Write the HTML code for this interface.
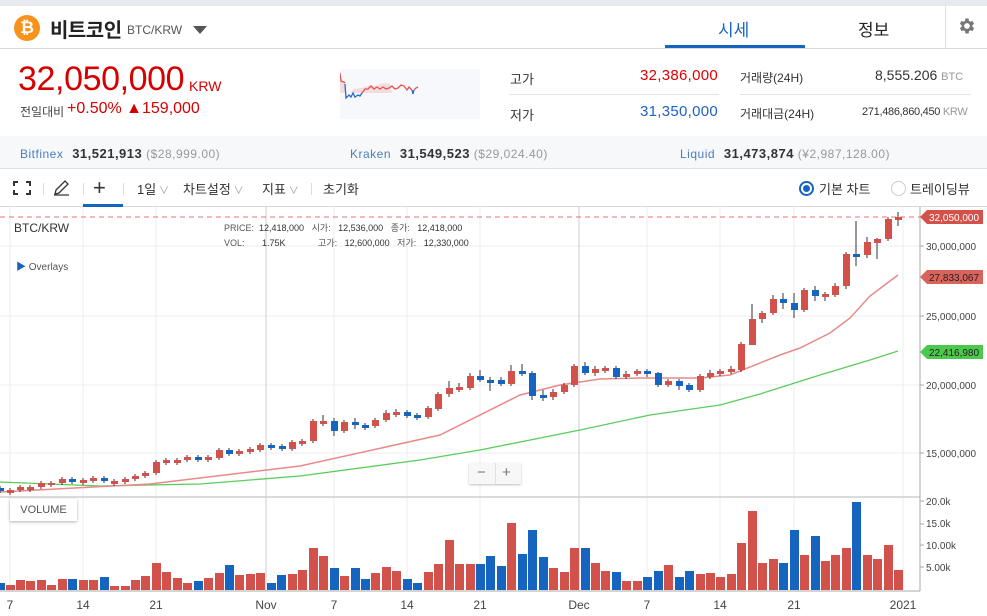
<!DOCTYPE html>
<html><head><meta charset="utf-8">
<style>
*{margin:0;padding:0;box-sizing:border-box}
body{width:987px;height:616px;overflow:hidden;background:#fff;font-family:"Liberation Sans","Noto Sans CJK KR",sans-serif;position:relative;color:#333}
.a{position:absolute;white-space:nowrap}
</style></head><body>
<div class="a" style="left:0;top:0;width:987px;height:6px;background:#e6e9ee"></div>
<!-- header -->
<div class="a" style="left:0;top:48px;width:987px;height:1px;background:#d5d8de"></div>
<div class="a" style="left:14px;top:15px;width:26px;height:26px;border-radius:50%;background:#f7931a;color:#fff;font-weight:bold;font-size:17px;text-align:center;line-height:26px">₿</div>
<div class="a" style="left:50px;top:14px;font-size:20px;font-weight:bold;color:#222;letter-spacing:-0.5px">비트코인</div>
<div class="a" style="left:127px;top:23px;font-size:12px;color:#555">BTC/KRW</div>
<div class="a" style="left:193px;top:26px;width:0;height:0;border-left:7px solid transparent;border-right:7px solid transparent;border-top:8px solid #555"></div>
<div class="a" style="left:718px;top:16px;font-size:17px;color:#1565c0">시세</div>
<div class="a" style="left:665px;top:45px;width:140px;height:3px;background:#1565c0"></div>
<div class="a" style="left:858px;top:16px;font-size:17px;color:#222">정보</div>
<div class="a" style="left:945px;top:6px;width:1px;height:42px;background:#e0e0e0"></div>
<svg class="a" style="left:957px;top:16px" width="20" height="20" viewBox="0 0 24 24"><path fill="#777" d="M19.4 13a7.5 7.5 0 000-2l2.1-1.6-2-3.5-2.5 1a7.3 7.3 0 00-1.7-1L15 3h-4l-.4 2.9a7.3 7.3 0 00-1.7 1l-2.5-1-2 3.5L6.6 11a7.5 7.5 0 000 2l-2.1 1.6 2 3.5 2.5-1a7.3 7.3 0 001.7 1L11 21h4l.4-2.9a7.3 7.3 0 001.7-1l2.5 1 2-3.5zM13 15.5a3.5 3.5 0 110-7 3.5 3.5 0 010 7z" transform="translate(-1 0)"/></svg>
<!-- price -->
<div class="a" style="left:18px;top:60px;font-size:34px;color:#d60000;letter-spacing:-0.4px">32,050,000</div>
<div class="a" style="left:189px;top:78px;font-size:14px;color:#d60000">KRW</div>
<div class="a" style="left:20px;top:103px;font-size:12px;color:#444">전일대비</div>
<div class="a" style="left:67px;top:100px;font-size:16px;color:#d60000">+0.50% ▲159,000</div>
<div class="a" style="left:340px;top:69px;width:140px;height:50px;background:#f7f8fb"></div>
<svg class="a" style="left:340px;top:69px" width="140" height="50"><path d="M0 4 L2 12 L5 14 L5 24 L0 24Z" fill="#f5dcdc"/><path d="M10 24 L14 20 L20 19 L25 18 L30 16 L35 17 L40 15 L45 14 L50 15 L52 24Z" fill="#f5dcdc"/><polyline points="0,4 1,12 4,13 5,14" fill="none" stroke="#e05555" stroke-width="1.3"/><polyline points="5,15 6,29 9,26 11,28 13,24 15,28 18,26 20,27 22,24" fill="none" stroke="#1e6fd0" stroke-width="1.3"/><polyline points="22,24 25,20 28,20 31,17 34,20 37,18 40,20 43,18 46,20 49,19 52,17 55,20 58,19 61,16 64,17 67,21 69,18 72,21" fill="none" stroke="#e05555" stroke-width="1.3"/><polyline points="72,21 73,25 74,21" fill="none" stroke="#1e6fd0" stroke-width="1.3"/><polyline points="74,21 76,19 78,18" fill="none" stroke="#e05555" stroke-width="1.3"/></svg>
<div class="a" style="left:510px;top:69px;font-size:13px;color:#333">고가</div>
<div class="a" style="left:640px;top:67px;font-size:15px;color:#e00000;letter-spacing:0.3px">32,386,000</div>
<div class="a" style="left:510px;top:94px;width:209px;height:1px;background:#e3e3e3"></div>
<div class="a" style="left:510px;top:105px;font-size:13px;color:#333">저가</div>
<div class="a" style="left:640px;top:103px;font-size:15px;color:#1e60c8;letter-spacing:0.3px">31,350,000</div>
<div class="a" style="left:740px;top:69px;font-size:12px;color:#333">거래량(24H)</div>
<div class="a" style="left:875px;top:67px;font-size:14px;color:#333">8,555.206 <span style="font-size:11px;color:#999">BTC</span></div>
<div class="a" style="left:740px;top:94px;width:230px;height:1px;background:#e3e3e3"></div>
<div class="a" style="left:740px;top:105px;font-size:12px;color:#333">거래대금(24H)</div>
<div class="a" style="left:862px;top:106px;font-size:11px;color:#333;letter-spacing:-0.3px">271,486,860,450 <span style="color:#999">KRW</span></div>
<!-- exchanges -->
<div class="a" style="left:0;top:136px;width:987px;height:33px;background:#f7f8fa;border-bottom:1px solid #dcdfe4"></div>
<div class="a" style="left:20px;top:146px;font-size:12px;color:#4a7fc0;letter-spacing:0.5px">Bitfinex <b style="color:#333;font-size:13px;margin-left:5px">31,521,913</b> <span style="color:#999">($28,999.00)</span></div>
<div class="a" style="left:350px;top:146px;font-size:12px;color:#4a7fc0;letter-spacing:0.5px">Kraken <b style="color:#333;font-size:13px;margin-left:5px">31,549,523</b> <span style="color:#999">($29,024.40)</span></div>
<div class="a" style="left:680px;top:146px;font-size:12px;color:#4a7fc0;letter-spacing:0.5px">Liquid <b style="color:#333;font-size:13px;margin-left:5px">31,473,874</b> <span style="color:#999">(¥2,987,128.00)</span></div>
<!-- toolbar -->
<div class="a" style="left:0;top:206px;width:987px;height:1px;background:#d8d8d8"></div>
<svg class="a" style="left:13px;top:181px" width="18" height="14" fill="none" stroke="#333" stroke-width="2"><path d="M1 5V1h4M13 1h4v4M17 9v4h-4M5 13H1V9"/></svg>
<div class="a" style="left:43px;top:183px;width:1px;height:12px;background:#ddd"></div>
<svg class="a" style="left:53px;top:180px" width="18" height="16" fill="none" stroke="#333" stroke-width="1.3"><path d="M2 14l1-4 9-9 3 3-9 9zM1 15h15"/></svg>
<div class="a" style="left:83px;top:183px;width:1px;height:12px;background:#ddd"></div>
<div class="a" style="left:93px;top:175px;font-size:22px;color:#333;font-weight:300">+</div>
<div class="a" style="left:83px;top:204px;width:40px;height:3px;background:#1565c0"></div>
<div class="a" style="left:123px;top:183px;width:1px;height:12px;background:#ddd"></div>
<div class="a" style="left:137px;top:179px;font-size:13px;color:#333">1일<span style="color:#999;font-size:10px"> ∨</span></div>
<div class="a" style="left:183px;top:179px;font-size:13px;color:#333">차트설정<span style="color:#999;font-size:10px"> ∨</span></div>
<div class="a" style="left:262px;top:179px;font-size:13px;color:#333">지표<span style="color:#999;font-size:10px"> ∨</span></div>
<div class="a" style="left:311px;top:183px;width:1px;height:12px;background:#ddd"></div>
<div class="a" style="left:323px;top:179px;font-size:13px;color:#333">초기화</div>
<div class="a" style="left:799px;top:181px;width:15px;height:15px;border-radius:50%;border:2px solid #1565c0"></div>
<div class="a" style="left:803px;top:185px;width:7px;height:7px;border-radius:50%;background:#1565c0"></div>
<div class="a" style="left:819px;top:179px;font-size:13px;color:#333">기본 차트</div>
<div class="a" style="left:891px;top:181px;width:15px;height:15px;border-radius:50%;border:1.5px solid #ccc"></div>
<div class="a" style="left:910px;top:179px;font-size:13px;color:#333">트레이딩뷰</div>
<!-- chart -->
<svg class="a" style="left:0;top:207px" width="987" height="409" viewBox="0 207 987 409">
<g stroke="#ececec" stroke-width="1">
<line x1="0" y1="246" x2="920" y2="246"/><line x1="0" y1="316" x2="920" y2="316"/><line x1="0" y1="385" x2="920" y2="385"/><line x1="0" y1="453" x2="920" y2="453"/>
<line x1="10" y1="207" x2="10" y2="591"/><line x1="83" y1="207" x2="83" y2="591"/><line x1="156" y1="207" x2="156" y2="591"/><line x1="334" y1="207" x2="334" y2="591"/><line x1="407" y1="207" x2="407" y2="591"/><line x1="480" y1="207" x2="480" y2="591"/><line x1="647" y1="207" x2="647" y2="591"/><line x1="720" y1="207" x2="720" y2="591"/><line x1="794" y1="207" x2="794" y2="591"/><line x1="903" y1="207" x2="903" y2="591"/>
</g>
<g stroke="#ccc"><line x1="266" y1="207" x2="266" y2="591"/><line x1="579" y1="207" x2="579" y2="591"/></g>
<line x1="0" y1="497" x2="920" y2="497" stroke="#cfcfcf" stroke-width="1.5"/>
<line x1="920" y1="207" x2="920" y2="591" stroke="#aaa"/>
<line x1="0" y1="591" x2="920" y2="591" stroke="#aaa"/>
<line x1="0" y1="217" x2="920" y2="217" stroke="#e57373" stroke-dasharray="5,4"/>
<polyline fill="none" stroke="#5ccc5c" stroke-width="1.3" points="0,482 100,486 200,484 300,476 420,460 480,450 580,430 650,415 720,405 760,394 820,375 870,360 898,351"/>
<polyline fill="none" stroke="#e88a8a" stroke-width="1.5" points="0,492 150,484 300,466 440,435 520,395 560,385 600,379 640,378 700,378 730,375 780,355 800,348 830,333 850,318 870,296 898,275"/>
<g stroke="#333" stroke-width="1">
<path d="M0 486v7M10 488v7M20 485v7M30 485v7M41 481v8M51 481v6M62 477v8M72 477v7M83 478v7M93 476v7M104 476v7M114 479v7M125 477v7M135 474v7M145 471v7M156 460v15M166 458v7M177 458v7M187 455v7M198 455v7M208 455v7M219 448v12M229 448v8M239 449v7M250 447v7M260 443v9M271 443v7M282 444v7M292 440v11M302 439v7M313 419v24M323 415v11M334 418v18M344 420v13M355 418v11M365 423v7M375 418v10M386 410v12M396 409v8M407 410v8M417 413v7M428 406v13M438 392v19M449 381v16M459 383v9M470 373v17M480 370v12M490 377v14M501 377v9M511 365v21M522 364v12M532 371v29M543 390v11M553 389v11M564 383v11M574 364v23M585 362v13M595 366v10M605 366v7M616 366v13M626 371v8M637 369v7M647 369v8M658 372v15M668 379v8M679 379v11M689 383v9M700 374v18M710 370v9M720 369v7M731 366v8M741 342v30M752 304v38M762 311v12M773 295v20M783 293v16M794 293v25M804 288v24M815 286v15M825 292v9M835 283v14M846 252v37M856 221v45M867 237v21M877 238v21M888 217v24M898 212v14"/>
</g>
<g fill="#d2514a">
<rect x="7" y="490" width="7" height="3"/><rect x="17" y="487" width="7" height="3"/><rect x="27" y="487" width="7" height="3"/><rect x="38" y="483" width="7" height="4"/><rect x="48" y="483" width="7" height="2"/><rect x="59" y="479" width="7" height="4"/><rect x="80" y="480" width="7" height="3"/><rect x="90" y="478" width="7" height="3"/><rect x="111" y="481" width="7" height="3"/><rect x="122" y="479" width="7" height="3"/><rect x="132" y="476" width="7" height="3"/><rect x="142" y="473" width="7" height="3"/><rect x="153" y="462" width="7" height="11"/><rect x="163" y="460" width="7" height="3"/><rect x="174" y="460" width="7" height="3"/><rect x="184" y="457" width="7" height="3"/><rect x="205" y="457" width="7" height="3"/><rect x="216" y="450" width="7" height="8"/><rect x="236" y="451" width="7" height="3"/><rect x="247" y="449" width="7" height="3"/><rect x="257" y="445" width="7" height="5"/>
<rect x="289" y="442" width="7" height="7"/><rect x="299" y="441" width="7" height="3"/><rect x="310" y="421" width="7" height="20"/><rect x="320" y="421" width="7" height="3"/><rect x="341" y="422" width="7" height="9"/><rect x="372" y="420" width="7" height="6"/><rect x="383" y="413" width="7" height="7"/><rect x="393" y="412" width="7" height="3"/><rect x="425" y="408" width="7" height="9"/><rect x="435" y="394" width="7" height="15"/><rect x="446" y="388" width="7" height="6"/><rect x="456" y="387" width="7" height="3"/><rect x="467" y="376" width="7" height="12"/><rect x="508" y="371" width="7" height="13"/><rect x="550" y="392" width="7" height="5"/><rect x="561" y="385" width="7" height="7"/><rect x="571" y="366" width="7" height="19"/><rect x="592" y="369" width="7" height="4"/><rect x="602" y="368" width="7" height="3"/>
<rect x="623" y="374" width="7" height="3"/><rect x="634" y="371" width="7" height="3"/><rect x="665" y="381" width="7" height="4"/><rect x="697" y="376" width="7" height="14"/><rect x="707" y="373" width="7" height="4"/><rect x="717" y="371" width="7" height="3"/><rect x="728" y="369" width="7" height="3"/><rect x="738" y="344" width="7" height="26"/><rect x="749" y="319" width="7" height="26"/><rect x="759" y="313" width="7" height="6"/><rect x="770" y="299" width="7" height="14"/><rect x="801" y="290" width="7" height="20"/><rect x="822" y="294" width="7" height="3"/><rect x="832" y="286" width="7" height="9"/><rect x="843" y="254" width="7" height="32"/><rect x="864" y="242" width="7" height="13"/><rect x="874" y="239" width="7" height="4"/><rect x="885" y="219" width="7" height="20"/><rect x="895" y="217" width="7" height="3"/>
</g>
<g fill="#1565c0">
<rect x="-3" y="488" width="7" height="3"/><rect x="69" y="479" width="7" height="3"/><rect x="101" y="478" width="7" height="3"/><rect x="195" y="457" width="7" height="3"/><rect x="226" y="450" width="7" height="4"/><rect x="268" y="445" width="7" height="3"/><rect x="279" y="446" width="7" height="3"/><rect x="331" y="421" width="7" height="10"/><rect x="352" y="422" width="7" height="3"/><rect x="362" y="425" width="7" height="3"/><rect x="404" y="412" width="7" height="4"/><rect x="414" y="415" width="7" height="3"/><rect x="477" y="376" width="7" height="4"/><rect x="487" y="380" width="7" height="3"/><rect x="498" y="380" width="7" height="4"/><rect x="519" y="371" width="7" height="3"/><rect x="529" y="373" width="7" height="23"/><rect x="540" y="395" width="7" height="3"/><rect x="582" y="366" width="7" height="7"/><rect x="613" y="368" width="7" height="9"/><rect x="644" y="371" width="7" height="3"/><rect x="655" y="373" width="7" height="12"/><rect x="676" y="381" width="7" height="5"/><rect x="686" y="385" width="7" height="5"/><rect x="780" y="299" width="7" height="4"/><rect x="791" y="303" width="7" height="7"/><rect x="812" y="290" width="7" height="6"/><rect x="853" y="254" width="7" height="3"/>
</g>
<!-- volume -->
<g fill="#d2514a">
<rect x="6" y="585" width="9" height="5"/><rect x="16" y="580" width="9" height="10"/><rect x="26" y="581" width="9" height="9"/><rect x="37" y="580" width="9" height="10"/><rect x="47" y="585" width="9" height="5"/><rect x="58" y="579" width="9" height="11"/><rect x="79" y="580" width="9" height="10"/><rect x="89" y="580" width="9" height="10"/><rect x="110" y="586" width="9" height="4"/><rect x="121" y="586" width="9" height="4"/><rect x="131" y="580" width="9" height="10"/><rect x="141" y="576" width="9" height="14"/><rect x="152" y="563" width="9" height="27"/><rect x="162" y="572" width="9" height="18"/><rect x="173" y="578" width="9" height="12"/><rect x="183" y="583" width="9" height="7"/><rect x="204" y="578" width="9" height="12"/><rect x="215" y="573" width="9" height="17"/><rect x="235" y="575" width="9" height="15"/><rect x="246" y="574" width="9" height="16"/><rect x="256" y="573" width="9" height="17"/><rect x="288" y="574" width="9" height="16"/><rect x="298" y="570" width="9" height="20"/><rect x="309" y="548" width="9" height="42"/><rect x="319" y="556" width="9" height="34"/><rect x="340" y="576" width="9" height="14"/><rect x="371" y="573" width="9" height="17"/><rect x="382" y="567" width="9" height="23"/><rect x="392" y="571" width="9" height="19"/><rect x="424" y="572" width="9" height="18"/><rect x="434" y="564" width="9" height="26"/><rect x="445" y="540" width="9" height="50"/><rect x="455" y="564" width="9" height="26"/><rect x="466" y="564" width="9" height="26"/><rect x="507" y="523" width="9" height="67"/><rect x="549" y="568" width="9" height="22"/><rect x="560" y="572" width="9" height="18"/><rect x="570" y="548" width="9" height="42"/><rect x="591" y="563" width="9" height="27"/><rect x="601" y="571" width="9" height="19"/><rect x="622" y="581" width="9" height="9"/><rect x="633" y="581" width="9" height="9"/><rect x="664" y="565" width="9" height="25"/><rect x="696" y="574" width="9" height="16"/><rect x="706" y="573" width="9" height="17"/><rect x="716" y="577" width="9" height="13"/><rect x="727" y="574" width="9" height="16"/><rect x="737" y="543" width="9" height="47"/><rect x="748" y="511" width="9" height="79"/><rect x="758" y="563" width="9" height="27"/><rect x="769" y="559" width="9" height="31"/><rect x="800" y="555" width="9" height="35"/><rect x="821" y="561" width="9" height="29"/><rect x="831" y="555" width="9" height="35"/><rect x="842" y="548" width="9" height="42"/><rect x="863" y="555" width="9" height="35"/><rect x="873" y="559" width="9" height="31"/><rect x="884" y="545" width="9" height="45"/><rect x="894" y="570" width="9" height="20"/>
</g>
<g fill="#1565c0">
<rect x="-4" y="583" width="9" height="7"/><rect x="68" y="579" width="9" height="11"/><rect x="100" y="577" width="9" height="13"/><rect x="194" y="581" width="9" height="9"/><rect x="225" y="565" width="9" height="25"/><rect x="267" y="583" width="9" height="7"/><rect x="277" y="575" width="9" height="15"/><rect x="330" y="568" width="9" height="22"/><rect x="351" y="568" width="9" height="22"/><rect x="361" y="579" width="9" height="11"/><rect x="403" y="579" width="9" height="11"/><rect x="413" y="583" width="9" height="7"/><rect x="476" y="564" width="9" height="26"/><rect x="486" y="556" width="9" height="34"/><rect x="497" y="566" width="9" height="24"/><rect x="518" y="554" width="9" height="36"/><rect x="528" y="530" width="9" height="60"/><rect x="539" y="557" width="9" height="33"/><rect x="581" y="548" width="9" height="42"/><rect x="612" y="572" width="9" height="18"/><rect x="643" y="577" width="9" height="13"/><rect x="654" y="571" width="9" height="19"/><rect x="675" y="577" width="9" height="13"/><rect x="685" y="571" width="9" height="19"/><rect x="779" y="563" width="9" height="27"/><rect x="790" y="530" width="9" height="60"/><rect x="811" y="536" width="9" height="54"/><rect x="852" y="502" width="9" height="88"/>
</g>
<g font-family="Liberation Sans, sans-serif" font-size="10" fill="#444">
<text x="926" y="250">30,000,000</text><text x="926" y="320">25,000,000</text><text x="926" y="389">20,000,000</text><text x="926" y="457">15,000,000</text>
<text x="926" y="505">20.0k</text><text x="926" y="527">15.0k</text><text x="926" y="549">10.00k</text><text x="926" y="571">5.00k</text>
</g>
<g stroke="#aaa"><path d="M920 501h4M920 524h4M920 545h4M920 567h4M920 246h4M920 316h4M920 385h4M920 453h4"/></g>
<path d="M920 217l7-7h56v14h-56z" fill="#d2514a"/><text x="929" y="221" font-size="10" fill="#fff" font-family="Liberation Sans, sans-serif">32,050,000</text>
<path d="M920 277l7-7h56v14h-56z" fill="#d9645c"/><text x="929" y="281" font-size="10" fill="#222" font-family="Liberation Sans, sans-serif">27,833,067</text>
<path d="M920 352l7-7h56v14h-56z" fill="#4cc94c"/><text x="929" y="356" font-size="10" fill="#222" font-family="Liberation Sans, sans-serif">22,416,980</text>
<g font-family="Liberation Sans, sans-serif" font-size="12" fill="#444" text-anchor="middle">
<text x="10" y="609">7</text><text x="83" y="609">14</text><text x="156" y="609">21</text><text x="266" y="609">Nov</text><text x="334" y="609">7</text><text x="407" y="609">14</text><text x="480" y="609">21</text><text x="579" y="609">Dec</text><text x="647" y="609">7</text><text x="720" y="609">14</text><text x="794" y="609">21</text><text x="903" y="609">2021</text>
</g>
</svg>
<div class="a" style="left:14px;top:221px;font-size:12px;color:#333">BTC/KRW</div>
<div class="a" style="left:224px;top:221px;font-size:9px;color:#555;line-height:15px">PRICE:&nbsp; <span style="color:#333">12,418,000</span>&nbsp;&nbsp; 시가: &nbsp;&nbsp;<span style="color:#333">12,536,000</span>&nbsp;&nbsp; 종가: &nbsp;&nbsp;<span style="color:#333">12,418,000</span><br>VOL: &nbsp;&nbsp;&nbsp;&nbsp;&nbsp; <span style="color:#333">1.75K</span>&nbsp;&nbsp;&nbsp;&nbsp;&nbsp;&nbsp;&nbsp;&nbsp;&nbsp;&nbsp;&nbsp;&nbsp; 고가: &nbsp;&nbsp;<span style="color:#333">12,600,000</span>&nbsp;&nbsp; 저가: &nbsp;&nbsp;<span style="color:#333">12,330,000</span></div>
<div class="a" style="left:16px;top:258px;font-size:10px;color:#1565c0">▶ <span style="color:#555">Overlays</span></div>
<div class="a" style="left:10px;top:499px;width:67px;height:22px;background:#fff;box-shadow:0 1px 3px rgba(0,0,0,.3);font-size:11px;color:#555;text-align:center;line-height:22px">VOLUME</div>
<div class="a" style="left:469px;top:463px;width:52px;height:21px;background:#f7f7f7;box-shadow:0 1px 2px rgba(0,0,0,.25);font-size:15px;color:#777;line-height:20px"><span style="position:absolute;left:8px">−</span><span style="position:absolute;left:26px;top:0;width:1px;height:21px;background:#e0e0e0"></span><span style="position:absolute;left:33px">+</span></div>
</body></html>
